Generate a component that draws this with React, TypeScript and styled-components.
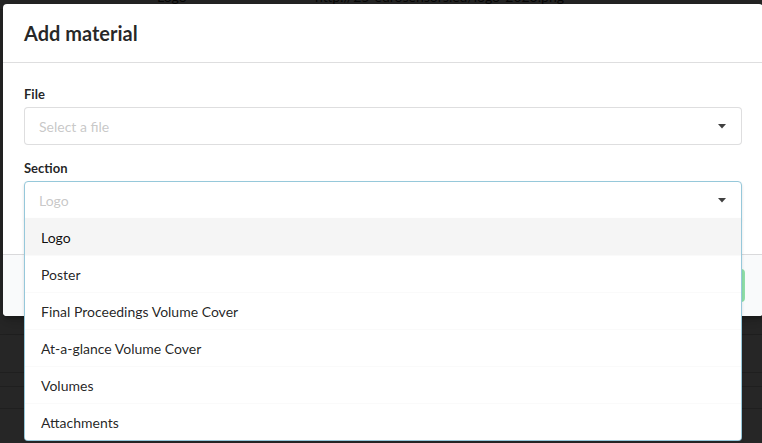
import React from "react";
import styled, { createGlobalStyle } from "styled-components";

const GlobalStyle = createGlobalStyle`
  html, body { margin: 0; padding: 0; }
  body {
    font-family: Lato, "Helvetica Neue", Arial, sans-serif;
    font-size: 14px;
    color: rgba(0, 0, 0, 0.87);
    background: #ffffff;
  }
  * { box-sizing: border-box; }
`;

const Page = styled.div`
  position: relative;
  width: 762px;
  height: 443px;
  overflow: hidden;
  background: #ffffff;
`;

const BgTable = styled.div`
  display: flex;
  flex-direction: column;
  margin-top: -16px;
`;

const BgRow = styled.div<{ $h: number }>`
  display: grid;
  grid-template-columns: 115px 40px 158px 1fr;
  height: ${(p) => p.$h}px;
  border-bottom: 1px solid #cfcfcf;
  font-size: 14px;
  color: #333;
  align-items: center;
`;

const BgCell = styled.div`
  padding: 0 2px;
  white-space: nowrap;
  overflow: hidden;
`;

const Dimmer = styled.div`
  position: absolute;
  inset: 0;
  background: rgba(0, 0, 0, 0.85);
`;

const Modal = styled.div`
  position: absolute;
  left: 3px;
  top: 4px;
  width: 760px;
  background: #ffffff;
  border-radius: 4px;
  box-shadow: 1px 3px 3px 0 rgba(0, 0, 0, 0.2), 1px 3px 15px 2px rgba(0, 0, 0, 0.2);
  display: flex;
  flex-direction: column;
`;

const Header = styled.div`
  padding: 17px 21px 16px;
  font-size: 20px;
  line-height: 25px;
  font-weight: 700;
  color: rgba(0, 0, 0, 0.85);
  border-bottom: 1px solid rgba(34, 36, 38, 0.15);
`;

const Content = styled.div`
  padding: 22px 21px 35px;
  display: flex;
  flex-direction: column;
  gap: 14px;
`;

const Field = styled.div`
  display: flex;
  flex-direction: column;
  gap: 4px;
  width: 718px;
`;

const Label = styled.label`
  font-size: 13px;
  line-height: 18px;
  font-weight: 700;
  color: rgba(0, 0, 0, 0.87);
`;

const SelectBox = styled.div<{ $open?: boolean }>`
  position: relative;
  height: 38px;
  display: flex;
  align-items: center;
  justify-content: space-between;
  padding: 0 15px 0 14px;
  border: 1px solid ${(p) => (p.$open ? "#96c8da" : "rgba(34, 36, 38, 0.15)")};
  border-radius: ${(p) => (p.$open ? "4px 4px 0 0" : "4px")};
  background: #fff;
  ${(p) => (p.$open ? "box-shadow: 0 2px 3px 0 rgba(34, 36, 38, 0.15);" : "")}
  z-index: ${(p) => (p.$open ? 10 : 1)};
`;

const Placeholder = styled.span`
  font-size: 14px;
  color: rgba(191, 191, 191, 0.87);
`;

const Caret = styled.svg`
  width: 8px;
  height: 5px;
  display: block;
`;

const Menu = styled.div`
  position: absolute;
  left: -1px;
  right: -1px;
  top: 100%;
  background: #fff;
  border: 1px solid #96c8da;
  border-top: none;
  border-radius: 0 0 4px 4px;
  box-shadow: 0 2px 3px 0 rgba(34, 36, 38, 0.15);
  display: flex;
  flex-direction: column;
  overflow: hidden;
`;

const Item = styled.div<{ $active?: boolean }>`
  height: 37px;
  display: flex;
  align-items: center;
  padding: 0 16px;
  border-top: 1px solid ${(p) => (p.$active ? "transparent" : "#fafafa")};
  font-size: 14px;
  color: ${(p) => (p.$active ? "rgba(0,0,0,0.95)" : "rgba(0,0,0,0.87)")};
  background: ${(p) => (p.$active ? "rgba(0,0,0,0.04)" : "#fff")};
`;

const Actions = styled.div`
  display: flex;
  justify-content: flex-end;
  gap: 10px;
  padding: 14px 18px 14px 14px;
  background: #f9fafb;
  border-top: 1px solid rgba(34, 36, 38, 0.15);
  border-radius: 0 0 4px 4px;
`;

const Button = styled.button`
  height: 33px;
  padding: 0 21px;
  border: none;
  border-radius: 4px;
  background: #8fdfa8;
  color: #fff;
  font-family: inherit;
  font-size: 14px;
  font-weight: 700;
`;

const sections = [
  "Logo",
  "Poster",
  "Final Proceedings Volume Cover",
  "At-a-glance Volume Cover",
  "Volumes",
  "Attachments",
];

const CaretIcon = () => (
  <Caret viewBox="0 0 8 5">
    <path d="M0 0 L8 0 L4 4.5 Z" fill="rgba(0,0,0,0.75)" />
  </Caret>
);

export default function App() {
  return (
    <>
      <GlobalStyle />
      <Page>
        <BgTable>
          <BgRow $h={26}>
            <BgCell />
            <BgCell />
            <BgCell>Logo</BgCell>
            <BgCell>http://25-eurosensors.eu/logo-2023.png</BgCell>
          </BgRow>
          <BgRow $h={325}>
            <BgCell />
          </BgRow>
          <BgRow $h={38}>
            <BgCell />
          </BgRow>
          <BgRow $h={14}>
            <BgCell />
          </BgRow>
          <BgRow $h={22}>
            <BgCell />
          </BgRow>
          <BgRow $h={40}>
            <BgCell />
          </BgRow>
        </BgTable>
        <Dimmer>
          <Modal>
            <Header>Add material</Header>
            <Content>
              <Field>
                <Label>File</Label>
                <SelectBox>
                  <Placeholder>Select a file</Placeholder>
                  <CaretIcon />
                </SelectBox>
              </Field>
              <Field>
                <Label>Section</Label>
                <SelectBox $open>
                  <Placeholder>Logo</Placeholder>
                  <CaretIcon />
                  <Menu>
                    {sections.map((s, i) => (
                      <Item key={s} $active={i === 0}>
                        {s}
                      </Item>
                    ))}
                  </Menu>
                </SelectBox>
              </Field>
            </Content>
            <Actions>
              <Button>Save</Button>
            </Actions>
          </Modal>
        </Dimmer>
      </Page>
    </>
  );
}
